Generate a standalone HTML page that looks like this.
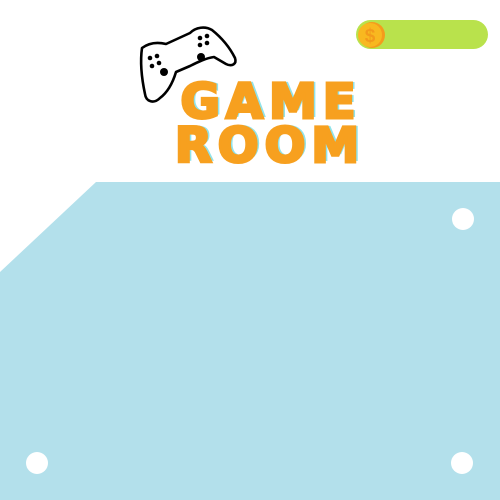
<!DOCTYPE html>
<html><head><style>
body{margin:0;width:500px;height:500px;background:#fff;position:relative;overflow:hidden;font-family:"Liberation Sans",sans-serif}
.t{position:absolute;width:300px;text-align:center;font-weight:bold;color:#f7a01f;font-size:48px;letter-spacing:6px;-webkit-text-stroke:3px #f7a01f;text-shadow:3px -1px 0 #8fe3ea;line-height:1;font-family:"DejaVu Sans","Liberation Sans",sans-serif}
</style></head><body>
<svg width="500" height="500" style="position:absolute;left:0;top:0">
<polygon points="96,182 500,182 500,500 0,500 0,272" fill="#b3e0eb"/>
<circle cx="463" cy="219" r="11" fill="#fff"/>
<circle cx="37" cy="463" r="11" fill="#fff"/>
<circle cx="462" cy="463" r="11" fill="#fff"/>
<rect x="356" y="20" width="132" height="29" rx="14.5" fill="#b9e24c"/>
<circle cx="372" cy="35" r="13" fill="#f49c1c"/>
<circle cx="370" cy="35" r="12" fill="#f8b820"/>
<text x="370" y="42" font-size="19" font-weight="bold" fill="#f39a1b" text-anchor="middle" font-family="Liberation Sans">$</text>
<path d="M142,48 C150,42 158,42 166,44 L190,33 C196,27 205,26 212,30 C222,38 230,48 235,58 C237,64 232,67 226,64 L214,57 C206,58 198,62 190,66 L176,72 C173,82 168,92 160,98 C154,104 146,102 145,94 C142,80 140,62 142,48 Z" fill="none" stroke="#000" stroke-width="2.6" stroke-linejoin="round"/>
<circle cx="150" cy="58" r="2.3"/><circle cx="157" cy="56" r="2.3"/><circle cx="152" cy="66" r="2.3"/><circle cx="159" cy="63" r="2.3"/>
<circle cx="164" cy="72" r="4"/>
<circle cx="200" cy="38" r="2.3"/><circle cx="207" cy="36" r="2.3"/><circle cx="200" cy="45" r="2.3"/><circle cx="207" cy="43" r="2.3"/>
<circle cx="201" cy="57" r="4"/>
</svg>
<div class="t" style="top:78px;left:121px">GAME</div>
<div class="t" style="top:122px;left:120px">ROOM</div>
</body></html>
